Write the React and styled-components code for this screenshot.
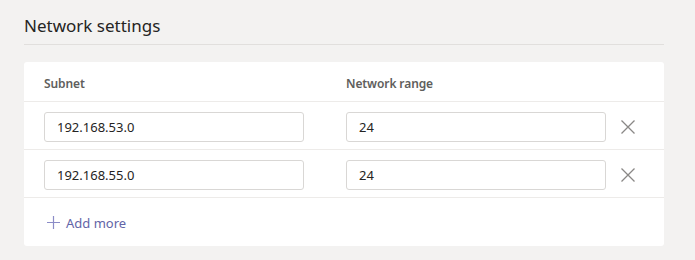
import React from 'react';
import styled, { createGlobalStyle } from 'styled-components';

const GlobalStyle = createGlobalStyle`
  body {
    margin: 0;
    background: #f3f2f1;
    font-family: "Noto Sans", "Open Sans", sans-serif;
  }
`

const Page = styled.div`
  padding: 12px 31px 14px 24px;
  box-sizing: border-box;
  width: 695px;
`

const Title = styled.h2`
  margin: 0;
  font-size: 17px;
  font-weight: 400;
  color: #252423;
  line-height: 28px;
  padding-bottom: 4px;
  border-bottom: 1px solid #e1dfdd;
`

const Card = styled.div`
  margin-top: 17px;
  background: #fff;
  border-radius: 3px;
`

const Row = styled.div`
  display: grid;
  grid-template-columns: 302px 274px 16px;
  align-items: center;
  padding: ${props => props.head ? '0 20px' : '3px 20px 0'};
  box-sizing: border-box;
  height: ${props => props.head ? '40px' : '48px'};
  border-bottom: 1px solid #edebe9;
`

const Label = styled.div`
  font-size: 12px;
  font-weight: 600;
  color: #605e5c;
  padding-top: 4px;
  letter-spacing: -0.1px;
`

const Input = styled.input`
  box-sizing: border-box;
  height: 30px;
  width: 260px;
  border: 1px solid #d9d7d5;
  border-radius: 3px;
  padding: 0 12px;
  font-family: inherit;
  font-size: 13px;
  color: #252423;
  outline: none;
`

const RemoveButton = styled.button`
  background: transparent;
  border: none;
  padding: 0;
  width: 16px;
  height: 16px;
  display: flex;
  align-items: center;
  justify-content: center;
  cursor: pointer;
`

const AddMore = styled.button`
  display: flex;
  align-items: center;
  gap: 6px;
  background: transparent;
  border: none;
  margin: 0;
  padding: 1px 20px 0 23px;
  height: 48px;
  color: #6264a7;
  font-family: inherit;
  font-size: 13px;
  cursor: pointer;
`

const Cross = () => (
  <svg width="16" height="16" viewBox="0 0 16 16">
    <path d="M1.5 1.5 L14.5 14.5 M14.5 1.5 L1.5 14.5" stroke="#8a8886" strokeWidth="1.3" fill="none" />
  </svg>
)

const Plus = () => (
  <svg width="13" height="13" viewBox="0 0 13 13">
    <path d="M6.5 0 V13 M0 6.5 H13" stroke="#8b8cc7" strokeWidth="1.2" fill="none" />
  </svg>
)

const subnets = [
  { id: 1, subnet: '192.168.53.0', range: '24' },
  { id: 2, subnet: '192.168.55.0', range: '24' },
]

const App = () => (
  <Page>
    <GlobalStyle />
    <Title>Network settings</Title>
    <Card>
      <Row head>
        <Label>Subnet</Label>
        <Label>Network range</Label>
      </Row>
      {subnets.map(item => (
        <Row key={item.id}>
          <Input defaultValue={item.subnet} />
          <Input defaultValue={item.range} />
          <RemoveButton title="remove"><Cross /></RemoveButton>
        </Row>
      ))}
      <AddMore><Plus />Add more</AddMore>
    </Card>
  </Page>
)

export default App;
